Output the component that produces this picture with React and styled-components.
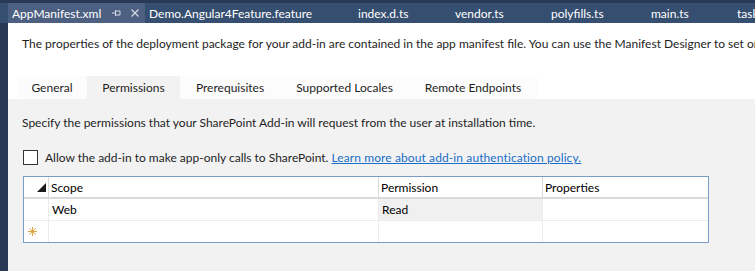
import styled, { createGlobalStyle } from 'styled-components'

const Global = createGlobalStyle`
    html, body {
        margin: 0;
        padding: 0;
    }
    body {
        font-family: Lato, "Noto Sans", sans-serif;
        font-size: 12px;
        color: #1e1e1e;
    }
`

const Window = styled.div`
    width: 755px;
    height: 271px;
    overflow: hidden;
    display: flex;
    flex-direction: column;
    background: #293955;
`

const TabWell = styled.div`
    margin-top: 3px;
    height: 20px;
    display: flex;
    align-items: stretch;
    padding-left: 8px;
    background: #364e6f;
    white-space: nowrap;
    flex-shrink: 0;
`

const DocTab = styled.div`
    display: flex;
    align-items: center;
    flex-shrink: 0;
    width: ${p => p.$w}px;
    padding-left: 4px;
    box-sizing: border-box;
    background: ${p => (p.$active ? '#4d6082' : 'transparent')};
    color: #fff;
    overflow: hidden;
`

const TabIcons = styled.span`
    display: flex;
    align-items: center;
    gap: 10px;
    margin-left: auto;
    margin-right: 6px;
`

const Body = styled.div`
    flex: 1;
    display: flex;
    flex-direction: column;
    margin-left: 8px;
    background: #fff;
    min-height: 0;
`

const Intro = styled.p`
    margin: 0;
    padding: 13px 0 0 14px;
    line-height: 16px;
    white-space: nowrap;
`

const PageTabs = styled.div`
    display: flex;
    margin-top: 24px;
    padding-left: 9px;
    height: 23px;
`

const PageTab = styled.div`
    width: ${p => p.$w}px;
    display: flex;
    align-items: center;
    justify-content: center;
    background: ${p => (p.$selected ? '#f2f2f2' : '#fcfcfc')};
    white-space: nowrap;
`

const Panel = styled.div`
    flex: 1;
    background: #f2f2f2;
    padding: 16px 0 0 14px;
`

const Hint = styled.p`
    margin: 0;
    line-height: 16px;
    white-space: nowrap;
`

const CheckRow = styled.label`
    display: flex;
    align-items: center;
    gap: 7px;
    margin-top: 19px;
    padding-left: 1px;
    white-space: nowrap;
`

const Box = styled.span`
    width: 13px;
    height: 13px;
    border: 1px solid #333;
    background: #fff;
    flex-shrink: 0;
`

const Link = styled.a`
    color: #1a6ec8;
    text-decoration: underline;
    letter-spacing: 0.1px;
    cursor: pointer;
`

const Grid = styled.div`
    margin: 11px 0 0 1px;
    width: 686px;
    box-sizing: border-box;
    border: 1px solid #7b9cc4;
    background: #fff;
    display: grid;
    grid-template-columns: 25px 330px 164px 1fr;
`

const Cell = styled.div`
    height: ${p => (p.$head ? 20 : 21)}px;
    display: flex;
    align-items: center;
    padding-left: ${p => (p.$head ? 2 : 3)}px;
    border-right: 1px solid ${p => (p.$head ? '#dadada' : '#ececec')};
    border-bottom: ${p => (p.$last ? 'none' : p.$head ? '2px solid #dadada' : '1px solid #ececec')};
    background: ${p => (p.$shade ? '#f0f0f0' : '#fff')};
    color: #000;
    white-space: nowrap;
    &:nth-child(4n) {
        border-right: none;
    }
`

const RowHead = styled(Cell)`
    justify-content: ${p => (p.$corner ? 'flex-end' : 'flex-start')};
    padding-left: ${p => (p.$corner ? 0 : 4)}px;
    padding-right: ${p => (p.$corner ? 2 : 0)}px;
`

function Pin() {
    return (
        <svg width="9" height="8" viewBox="0 0 9 8">
            <path d="M0 4h3M3.5 1v6M3.5 2h4.5v4h-4.5" stroke="#d4dae4" strokeWidth="1" fill="none" />
        </svg>
    )
}

function Close() {
    return (
        <svg width="8" height="8" viewBox="0 0 8 8">
            <path d="M0.5 0.5l7 7M7.5 0.5l-7 7" stroke="#d4dae4" strokeWidth="1.2" fill="none" />
        </svg>
    )
}

function Corner() {
    return (
        <svg width="9" height="9" viewBox="0 0 9 9">
            <polygon points="9,0 9,9 0,9" fill="#1a1a1a" />
        </svg>
    )
}

function NewRow() {
    return (
        <svg width="9" height="9" viewBox="0 0 9 9">
            <path d="M4.5 0v9M0 4.5h9M1.3 1.3l6.4 6.4M7.7 1.3l-6.4 6.4" stroke="#d99a34" strokeWidth="0.9" fill="none" />
        </svg>
    )
}

const docTabs = [
    { name: 'Demo.Angular4Feature.feature', w: 209 },
    { name: 'index.d.ts', w: 97 },
    { name: 'vendor.ts', w: 96 },
    { name: 'polyfills.ts', w: 100 },
    { name: 'main.ts', w: 86 },
    { name: 'tasks.json', w: 90 },
]

const pageTabs = [
    { name: 'General', w: 70 },
    { name: 'Permissions', w: 93, selected: true },
    { name: 'Prerequisites', w: 100 },
    { name: 'Supported Locales', w: 129 },
    { name: 'Remote Endpoints', w: 128 },
]

export default function App() {
    return (
        <>
            <Global />
            <Window>
                <TabWell>
                    <DocTab $active $w={137}>
                        AppManifest.xml
                        <TabIcons>
                            <Pin />
                            <Close />
                        </TabIcons>
                    </DocTab>
                    {docTabs.map(t => (
                        <DocTab key={t.name} $w={t.w}>{t.name}</DocTab>
                    ))}
                </TabWell>
                <Body>
                    <Intro>
                        The properties of the deployment package for your add-in are contained in the app manifest file. You can use the Manifest Designer to set or change them.
                    </Intro>
                    <PageTabs>
                        {pageTabs.map(t => (
                            <PageTab key={t.name} $w={t.w} $selected={t.selected}>{t.name}</PageTab>
                        ))}
                    </PageTabs>
                    <Panel>
                        <Hint>Specify the permissions that your SharePoint Add-in will request from the user at installation time.</Hint>
                        <CheckRow>
                            <Box />
                            <span>
                                Allow the add-in to make app-only calls to SharePoint. <Link>Learn more about add-in authentication policy.</Link>
                            </span>
                        </CheckRow>
                        <Grid>
                            <RowHead $head $corner><Corner /></RowHead>
                            <Cell $head>Scope</Cell>
                            <Cell $head>Permission</Cell>
                            <Cell $head>Properties</Cell>

                            <RowHead />
                            <Cell>Web</Cell>
                            <Cell $shade>Read</Cell>
                            <Cell />

                            <RowHead $last><NewRow /></RowHead>
                            <Cell $last />
                            <Cell $last />
                            <Cell $last />
                        </Grid>
                    </Panel>
                </Body>
            </Window>
        </>
    )
}
